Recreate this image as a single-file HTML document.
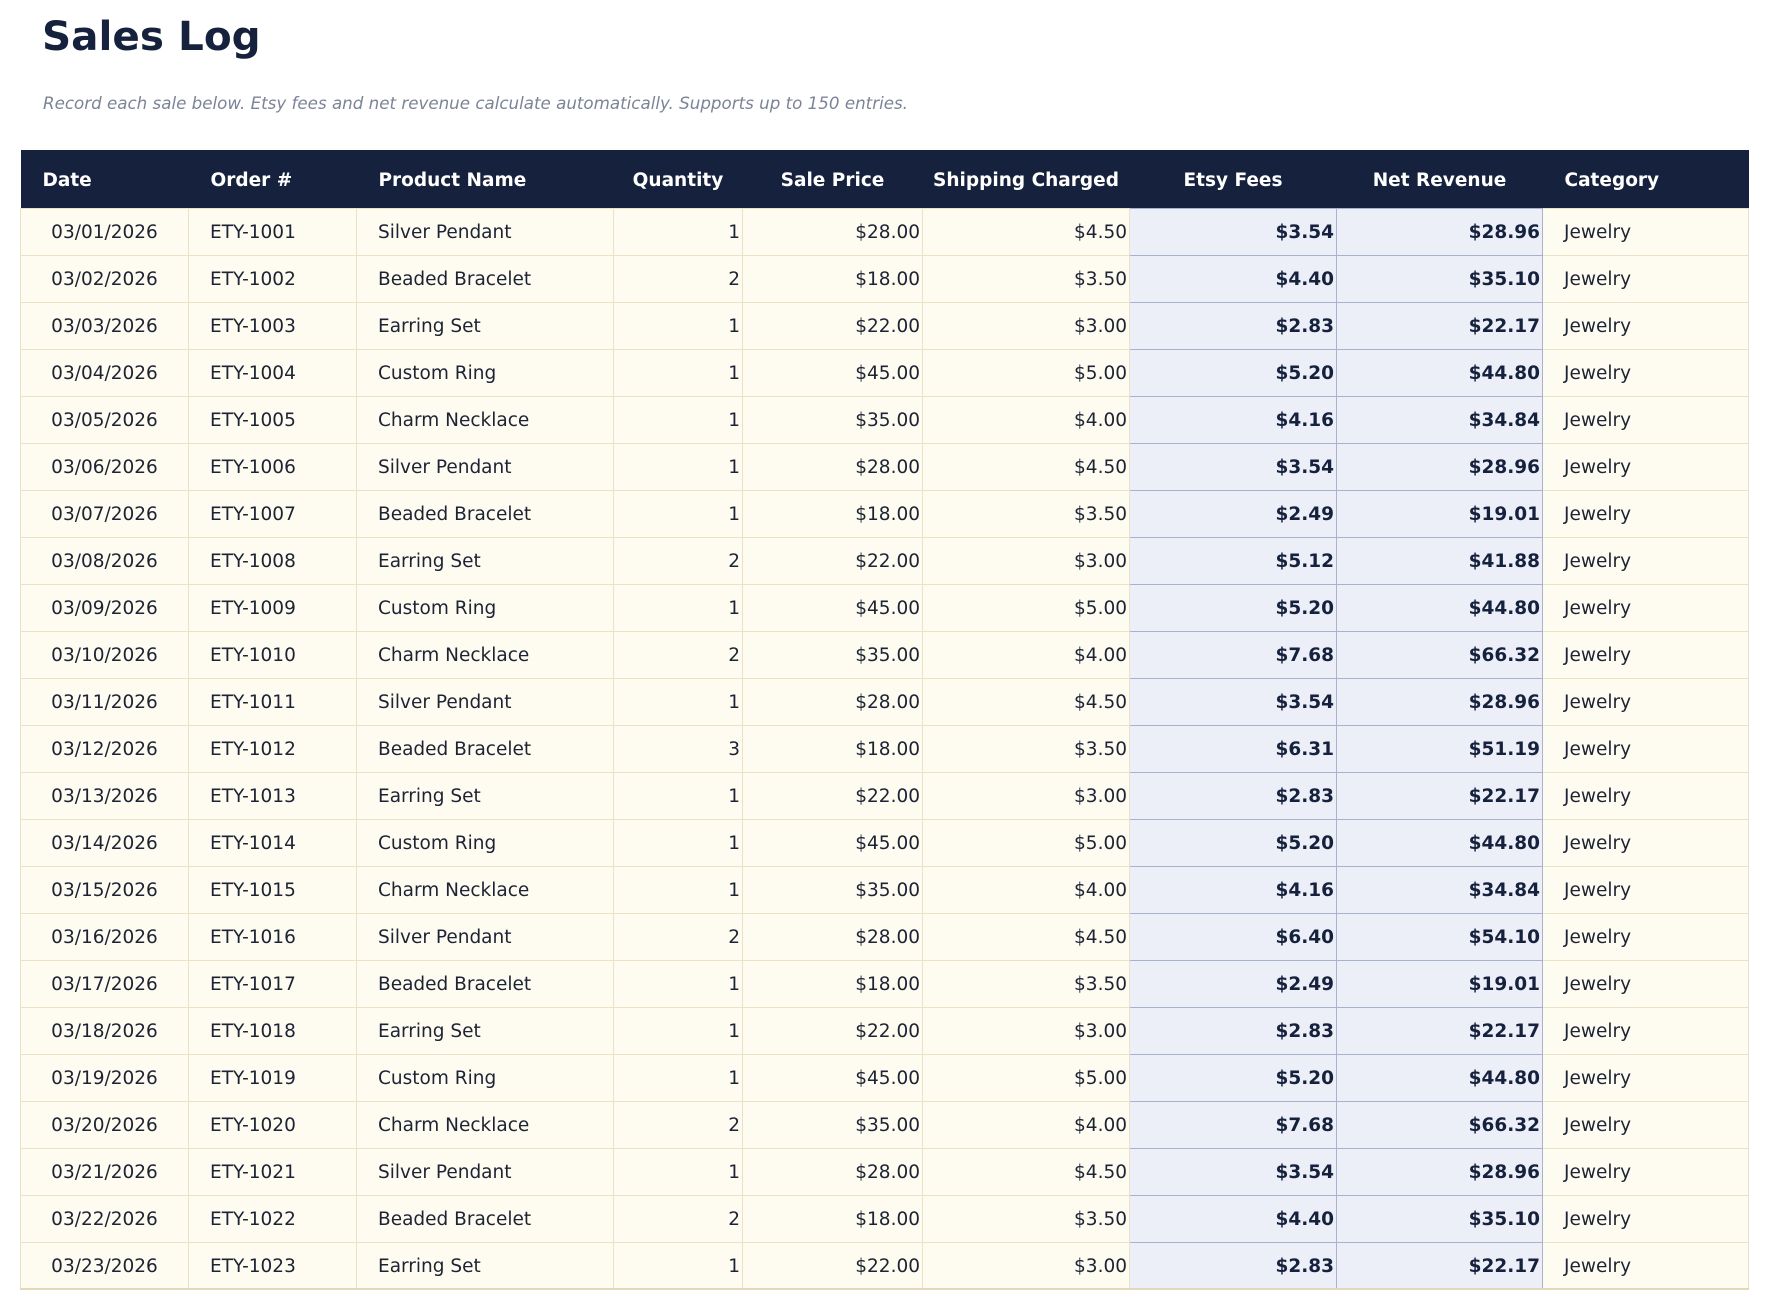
<!DOCTYPE html>
<html><head><meta charset="utf-8"><style>
*{margin:0;padding:0;box-sizing:border-box}
body{width:1770px;height:1309px;background:#fff;font-family:"DejaVu Sans","Liberation Sans",sans-serif;color:#1c2333;position:relative;overflow:hidden}
h1{position:absolute;left:42px;top:12px;font-size:40.5px;font-weight:bold;color:#16223d}
.sub{position:absolute;left:43px;top:93px;font-size:16.7px;font-style:italic;color:#7b8497}
table{position:absolute;left:20px;top:150px;width:1728px;border-collapse:collapse;table-layout:fixed;font-size:18.5px}
th{background:#16223d;color:#fff;height:58px;font-weight:bold;text-align:center;padding:4px 0 0 0;white-space:nowrap}
th.l{text-align:left;padding-left:22px}
td{height:47px;background:#fefbf1;border:1px solid #ebe2c6;padding:2px 2px 0 21px;white-space:nowrap;color:#1c2333}
td.c{text-align:center;padding-left:0;padding-right:0}
td.r{text-align:right}
td.f{background:#eceff7;border-color:#a9b2cd;font-weight:bold;color:#16223d;text-align:right}
tr:last-child td{border-bottom:2px solid #e3d9b8}
</style></head><body>
<h1>Sales Log</h1>
<div class="sub">Record each sale below. Etsy fees and net revenue calculate automatically. Supports up to 150 entries.</div>
<table>
<colgroup><col style="width:168px"><col style="width:168px"><col style="width:257px"><col style="width:129px"><col style="width:180px"><col style="width:207px"><col style="width:207px"><col style="width:206px"><col style="width:206px"></colgroup>
<tr><th class="l">Date</th><th class="l">Order #</th><th class="l">Product Name</th><th>Quantity</th><th>Sale Price</th><th>Shipping Charged</th><th>Etsy Fees</th><th>Net Revenue</th><th class="l">Category</th></tr>
<tr><td class="c">03/01/2026</td><td>ETY-1001</td><td>Silver Pendant</td><td class="r">1</td><td class="r">$28.00</td><td class="r">$4.50</td><td class="f">$3.54</td><td class="f">$28.96</td><td>Jewelry</td></tr>
<tr><td class="c">03/02/2026</td><td>ETY-1002</td><td>Beaded Bracelet</td><td class="r">2</td><td class="r">$18.00</td><td class="r">$3.50</td><td class="f">$4.40</td><td class="f">$35.10</td><td>Jewelry</td></tr>
<tr><td class="c">03/03/2026</td><td>ETY-1003</td><td>Earring Set</td><td class="r">1</td><td class="r">$22.00</td><td class="r">$3.00</td><td class="f">$2.83</td><td class="f">$22.17</td><td>Jewelry</td></tr>
<tr><td class="c">03/04/2026</td><td>ETY-1004</td><td>Custom Ring</td><td class="r">1</td><td class="r">$45.00</td><td class="r">$5.00</td><td class="f">$5.20</td><td class="f">$44.80</td><td>Jewelry</td></tr>
<tr><td class="c">03/05/2026</td><td>ETY-1005</td><td>Charm Necklace</td><td class="r">1</td><td class="r">$35.00</td><td class="r">$4.00</td><td class="f">$4.16</td><td class="f">$34.84</td><td>Jewelry</td></tr>
<tr><td class="c">03/06/2026</td><td>ETY-1006</td><td>Silver Pendant</td><td class="r">1</td><td class="r">$28.00</td><td class="r">$4.50</td><td class="f">$3.54</td><td class="f">$28.96</td><td>Jewelry</td></tr>
<tr><td class="c">03/07/2026</td><td>ETY-1007</td><td>Beaded Bracelet</td><td class="r">1</td><td class="r">$18.00</td><td class="r">$3.50</td><td class="f">$2.49</td><td class="f">$19.01</td><td>Jewelry</td></tr>
<tr><td class="c">03/08/2026</td><td>ETY-1008</td><td>Earring Set</td><td class="r">2</td><td class="r">$22.00</td><td class="r">$3.00</td><td class="f">$5.12</td><td class="f">$41.88</td><td>Jewelry</td></tr>
<tr><td class="c">03/09/2026</td><td>ETY-1009</td><td>Custom Ring</td><td class="r">1</td><td class="r">$45.00</td><td class="r">$5.00</td><td class="f">$5.20</td><td class="f">$44.80</td><td>Jewelry</td></tr>
<tr><td class="c">03/10/2026</td><td>ETY-1010</td><td>Charm Necklace</td><td class="r">2</td><td class="r">$35.00</td><td class="r">$4.00</td><td class="f">$7.68</td><td class="f">$66.32</td><td>Jewelry</td></tr>
<tr><td class="c">03/11/2026</td><td>ETY-1011</td><td>Silver Pendant</td><td class="r">1</td><td class="r">$28.00</td><td class="r">$4.50</td><td class="f">$3.54</td><td class="f">$28.96</td><td>Jewelry</td></tr>
<tr><td class="c">03/12/2026</td><td>ETY-1012</td><td>Beaded Bracelet</td><td class="r">3</td><td class="r">$18.00</td><td class="r">$3.50</td><td class="f">$6.31</td><td class="f">$51.19</td><td>Jewelry</td></tr>
<tr><td class="c">03/13/2026</td><td>ETY-1013</td><td>Earring Set</td><td class="r">1</td><td class="r">$22.00</td><td class="r">$3.00</td><td class="f">$2.83</td><td class="f">$22.17</td><td>Jewelry</td></tr>
<tr><td class="c">03/14/2026</td><td>ETY-1014</td><td>Custom Ring</td><td class="r">1</td><td class="r">$45.00</td><td class="r">$5.00</td><td class="f">$5.20</td><td class="f">$44.80</td><td>Jewelry</td></tr>
<tr><td class="c">03/15/2026</td><td>ETY-1015</td><td>Charm Necklace</td><td class="r">1</td><td class="r">$35.00</td><td class="r">$4.00</td><td class="f">$4.16</td><td class="f">$34.84</td><td>Jewelry</td></tr>
<tr><td class="c">03/16/2026</td><td>ETY-1016</td><td>Silver Pendant</td><td class="r">2</td><td class="r">$28.00</td><td class="r">$4.50</td><td class="f">$6.40</td><td class="f">$54.10</td><td>Jewelry</td></tr>
<tr><td class="c">03/17/2026</td><td>ETY-1017</td><td>Beaded Bracelet</td><td class="r">1</td><td class="r">$18.00</td><td class="r">$3.50</td><td class="f">$2.49</td><td class="f">$19.01</td><td>Jewelry</td></tr>
<tr><td class="c">03/18/2026</td><td>ETY-1018</td><td>Earring Set</td><td class="r">1</td><td class="r">$22.00</td><td class="r">$3.00</td><td class="f">$2.83</td><td class="f">$22.17</td><td>Jewelry</td></tr>
<tr><td class="c">03/19/2026</td><td>ETY-1019</td><td>Custom Ring</td><td class="r">1</td><td class="r">$45.00</td><td class="r">$5.00</td><td class="f">$5.20</td><td class="f">$44.80</td><td>Jewelry</td></tr>
<tr><td class="c">03/20/2026</td><td>ETY-1020</td><td>Charm Necklace</td><td class="r">2</td><td class="r">$35.00</td><td class="r">$4.00</td><td class="f">$7.68</td><td class="f">$66.32</td><td>Jewelry</td></tr>
<tr><td class="c">03/21/2026</td><td>ETY-1021</td><td>Silver Pendant</td><td class="r">1</td><td class="r">$28.00</td><td class="r">$4.50</td><td class="f">$3.54</td><td class="f">$28.96</td><td>Jewelry</td></tr>
<tr><td class="c">03/22/2026</td><td>ETY-1022</td><td>Beaded Bracelet</td><td class="r">2</td><td class="r">$18.00</td><td class="r">$3.50</td><td class="f">$4.40</td><td class="f">$35.10</td><td>Jewelry</td></tr>
<tr><td class="c">03/23/2026</td><td>ETY-1023</td><td>Earring Set</td><td class="r">1</td><td class="r">$22.00</td><td class="r">$3.00</td><td class="f">$2.83</td><td class="f">$22.17</td><td>Jewelry</td></tr>
</table>
</body></html>
